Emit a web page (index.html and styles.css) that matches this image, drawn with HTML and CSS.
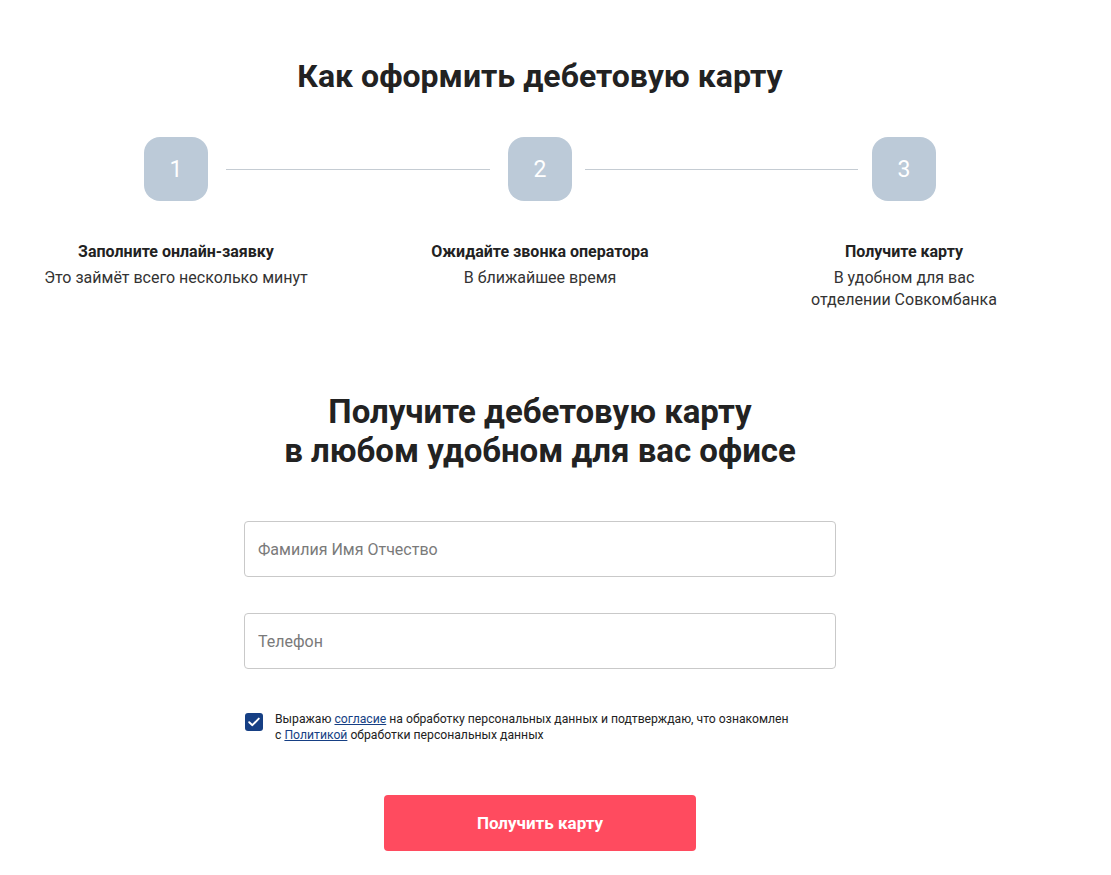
FILE: index.html
```html
<!DOCTYPE html>
<html lang="ru">
<head>
<meta charset="utf-8">
<link rel="stylesheet" href="styles.css">
</head>
<body>
<main class="page">
  <h2 class="title">Как оформить дебетовую карту</h2>
  <div class="track">
    <div class="num">1</div>
    <div class="line line-a"></div>
    <div class="num">2</div>
    <div class="line line-b"></div>
    <div class="num">3</div>
  </div>
  <div class="steps">
    <div class="step">
      <div class="step-title">Заполните онлайн-заявку</div>
      <div class="step-text">Это займёт всего несколько минут</div>
    </div>
    <div class="step">
      <div class="step-title">Ожидайте звонка оператора</div>
      <div class="step-text">В ближайшее время</div>
    </div>
    <div class="step">
      <div class="step-title">Получите карту</div>
      <div class="step-text">В удобном для вас<br>отделении Совкомбанка</div>
    </div>
  </div>

  <h2 class="title title-form">Получите дебетовую карту<br>в любом удобном для вас офисе</h2>
  <form class="form">
    <input class="field" type="text" placeholder="Фамилия Имя Отчество">
    <input class="field" type="text" placeholder="Телефон">
    <label class="agree">
      <span class="check">
        <svg width="12" height="10" viewBox="0 0 12 10"><path d="M1.2 5.2 L4.4 8.2 L10.8 1.6" fill="none" stroke="#fff" stroke-width="1.9" stroke-linecap="round" stroke-linejoin="round"/></svg>
      </span>
      <span class="agree-text">Выражаю <a href="#">согласие</a> на обработку персональных данных и подтверждаю, что ознакомлен<br>с <a href="#">Политикой</a> обработки персональных данных</span>
    </label>
    <button class="btn" type="button">Получить карту</button>
  </form>
</main>
</body>
</html>
```

FILE: styles.css
```css
* { box-sizing: border-box; }
html, body { margin: 0; padding: 0; background: #fff; }
body {
  font-family: Roboto, "Liberation Sans", Arial, sans-serif;
  color: #222;
}
.page {
  width: 1080px;
  padding-top: 56px;
  padding-bottom: 20px;
}
.title {
  margin: 0;
  text-align: center;
  font-size: 32px;
  line-height: 40px;
  font-weight: 700;
  color: #222222;
}
.track {
  display: flex;
  align-items: center;
  padding-left: 144px;
  margin-top: 41px;
}
.num {
  width: 64px;
  height: 64px;
  flex: none;
  border-radius: 16px;
  background: #bccad8;
  color: #fff;
  font-size: 23px;
  display: flex;
  align-items: center;
  justify-content: center;
}
.line {
  height: 1px;
  background: #c5ccd3;
}
.line-a { flex: 0 0 264px; margin: 0 18px; }
.line-b { flex: 0 0 273px; margin: 0 14px 0 13px; }
.steps {
  display: grid;
  grid-template-columns: repeat(3, 1fr);
  column-gap: 12px;
  margin-top: 40px;
  text-align: center;
}
.step-title {
  font-size: 16px;
  line-height: 22px;
  font-weight: 700;
  color: #222;
}
.step-text {
  margin-top: 4px;
  font-size: 16px;
  line-height: 22px;
  color: #333;
}
.title-form {
  margin-top: 81px;
  font-size: 33px;
  line-height: 39px;
}
.form {
  width: 592px;
  margin: 51px 0 0 244px;
  display: flex;
  flex-direction: column;
}
.field {
  height: 56px;
  width: 100%;
  border: 1px solid #c9c9c9;
  border-radius: 4px;
  padding: 0 13px;
  font-family: inherit;
  font-size: 16px;
  color: #222;
  margin-bottom: 36px;
}
.field::placeholder { color: #7a7a7a; }
.agree {
  display: flex;
  align-items: flex-start;
  margin-top: 6px;
  gap: 12px;
}
.check {
  flex: none;
  width: 18px;
  height: 18px;
  margin-top: 2px;
  margin-left: 1px;
  border-radius: 3px;
  background: #163f84;
  display: flex;
  align-items: center;
  justify-content: center;
}
.agree-text {
  font-size: 12.2px;
  line-height: 16px;
  color: #222;
}
.agree-text a {
  color: #163f84;
  text-decoration: underline;
}
.btn {
  align-self: center;
  margin-top: 52px;
  width: 312px;
  height: 56px;
  border: 0;
  border-radius: 4px;
  background: #ff4b5f;
  color: #fff;
  font-family: inherit;
  font-size: 17px;
  font-weight: 700;
}
```
